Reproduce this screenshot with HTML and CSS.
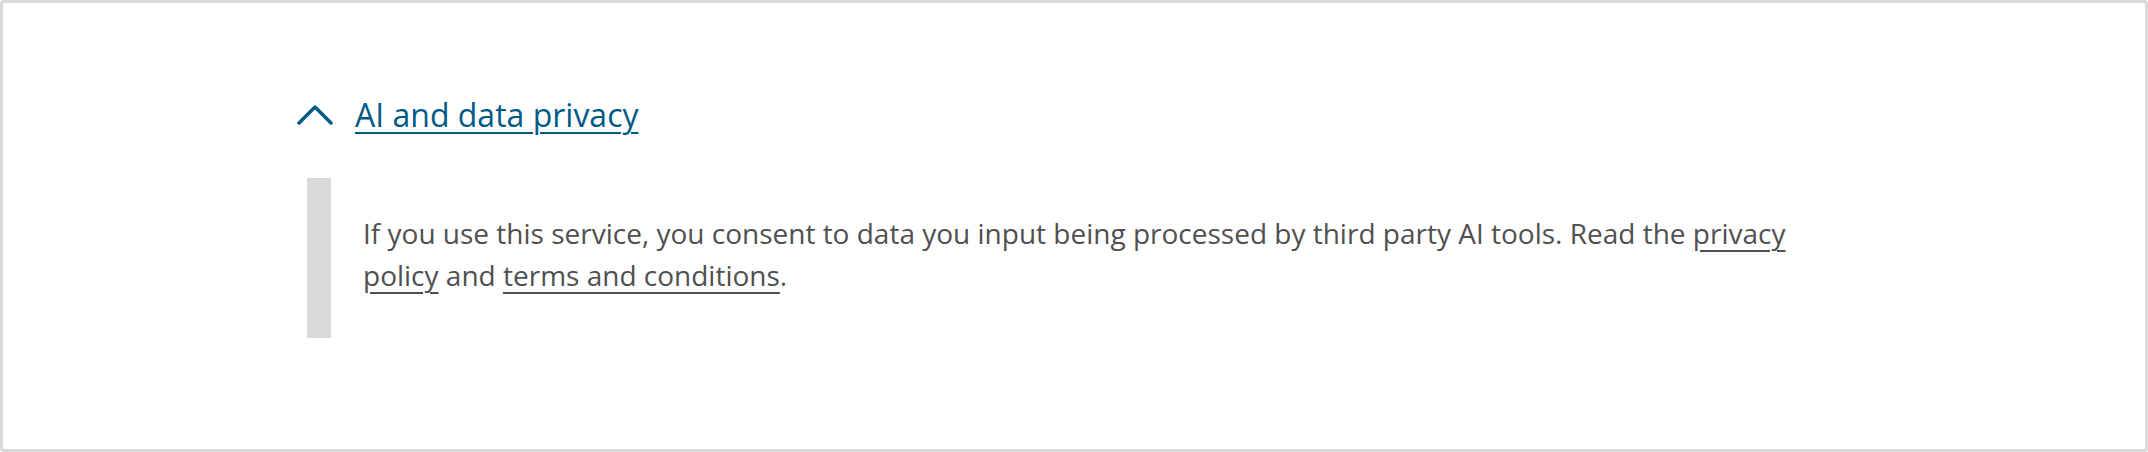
FILE: index.html
```html
<!DOCTYPE html>
<html>
  <head>
    <title>AI and data privacy</title>
    <link rel="stylesheet" href="styles.css">
  </head>
  <body>
    <div class="frame">
      <div class="disclosure">
        <div class="disclosure-summary">
          <svg class="chevron" width="36" height="20" viewBox="0 0 36 20" aria-hidden="true">
            <polyline points="2,18 18,2 34,18" fill="none" stroke="#005a87" stroke-width="3.5" stroke-linecap="round" stroke-linejoin="round"/>
          </svg>
          <a class="summary-link" href="#">AI and data privacy</a>
        </div>
        <div class="disclosure-body">
          <p>If you use this service, you consent to data you input being processed by third party AI tools. Read the <a href="#">privacy policy</a> and <a href="#">terms and conditions</a>.</p>
        </div>
      </div>
    </div>
  </body>
</html>
```

FILE: styles.css
```css
/* Global styles */
body {
  font-family: "Open Sans", Arial, sans-serif;
  margin: 0;
  padding: 0;
  background-color: #ffffff;
}

/* Outer frame */
.frame {
  box-sizing: border-box;
  height: 452px;
  border: 3px solid #d9d9d9;
  border-radius: 4px;
  padding: 92px 0 0 294px;
}

/* Disclosure */
.disclosure-summary {
  display: flex;
  align-items: center;
  gap: 22px;
}

.chevron {
  display: block;
}

.summary-link {
  color: #005a87;
  font-size: 32px;
  line-height: 40px;
  text-decoration: underline;
  text-decoration-thickness: 2px;
  text-underline-offset: 5px;
}

.disclosure-body {
  margin: 43px 0 0 10px;
  border-left: 24px solid #d9d9d9;
  padding: 34px 0 42px 32px;
  max-width: 1440px;
}

.disclosure-body p {
  margin: 0;
  color: #505050;
  font-size: 28px;
  line-height: 42px;
}

.disclosure-body a {
  color: #505050;
  text-decoration: underline;
  text-decoration-thickness: 2px;
  text-underline-offset: 6px;
}
```
